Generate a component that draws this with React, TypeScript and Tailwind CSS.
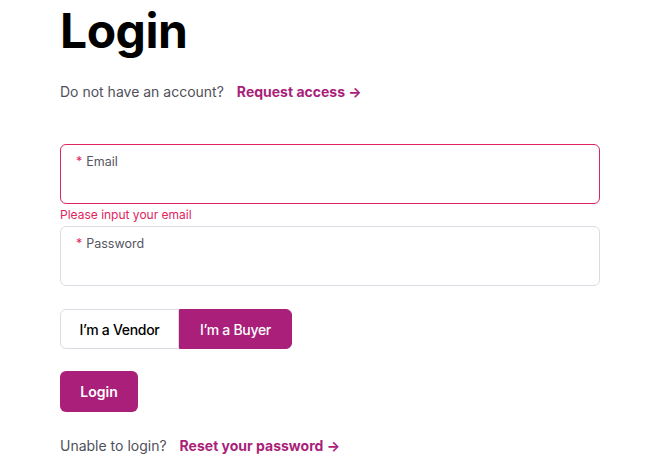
import React, { useState } from 'react';

const font = { fontFamily: 'Inter, "Noto Sans", sans-serif' };

function Field({ label, error }: { label: string; error?: boolean }) {
  return (
    <div
      className={`h-[60px] w-[540px] rounded-md border bg-white px-[15px] pt-[8px] ${
        error ? 'border-[#e0245e]' : 'border-[#dcdbe3]'
      }`}
    >
      <label className="flex items-center text-[12.5px] text-[#55555f]">
        <span className="mr-[4px] text-[#e0245e]">*</span>
        {label}
      </label>
    </div>
  );
}

function App() {
  const [role, setRole] = useState<'vendor' | 'buyer'>('buyer');

  return (
    <div className="min-h-screen bg-white" style={font}>
      <div className="pl-[60px]">
        {/* Title */}
        <h1 className="pt-[1px] text-[48px] font-bold leading-[60px] tracking-[-0.5px] text-black">Login</h1>

        <div className="mt-[21px] flex items-center text-[14px] leading-[20px]">
          <span className="text-[#50505a]">Do not have an account?</span>
          <a className="ml-[13px] font-bold text-[#a91f7a]">Request access →</a>
        </div>

        {/* Form */}
        <div className="mt-[42px]">
          <Field label="Email" error />
          <p className="mt-[2px] text-[12px] leading-[17px] text-[#e0245e]">Please input your email</p>
          <div className="mt-[3px]">
            <Field label="Password" />
          </div>
        </div>

        {/* Role toggle */}
        <div className="mt-[23px] flex h-[40px] w-fit">
          <button
            onClick={() => setRole('vendor')}
            className={`w-[119px] rounded-l-md border text-[14px] font-medium tracking-[-0.3px] ${
              role === 'vendor' ? 'border-[#a91f7a] bg-[#a91f7a] text-white' : 'border-[#dcdbe3] bg-white text-black'
            }`}
          >
            I’m a Vendor
          </button>
          <button
            onClick={() => setRole('buyer')}
            className={`w-[113px] rounded-r-md border text-[14px] font-medium tracking-[-0.3px] ${
              role === 'buyer' ? 'border-[#a91f7a] bg-[#a91f7a] text-white' : 'border-[#dcdbe3] bg-white text-black'
            }`}
          >
            I’m a Buyer
          </button>
        </div>

        <button className="mt-[22px] h-[41px] w-[78px] rounded-md bg-[#a91f7a] text-[14px] font-semibold text-white">
          Login
        </button>

        <div className="mt-[24px] flex items-center text-[14px] leading-[20px]">
          <span className="text-[#50505a]">Unable to login?</span>
          <a className="ml-[13px] font-bold text-[#a91f7a]">Reset your password →</a>
        </div>
      </div>
    </div>
  );
}

export default App;
